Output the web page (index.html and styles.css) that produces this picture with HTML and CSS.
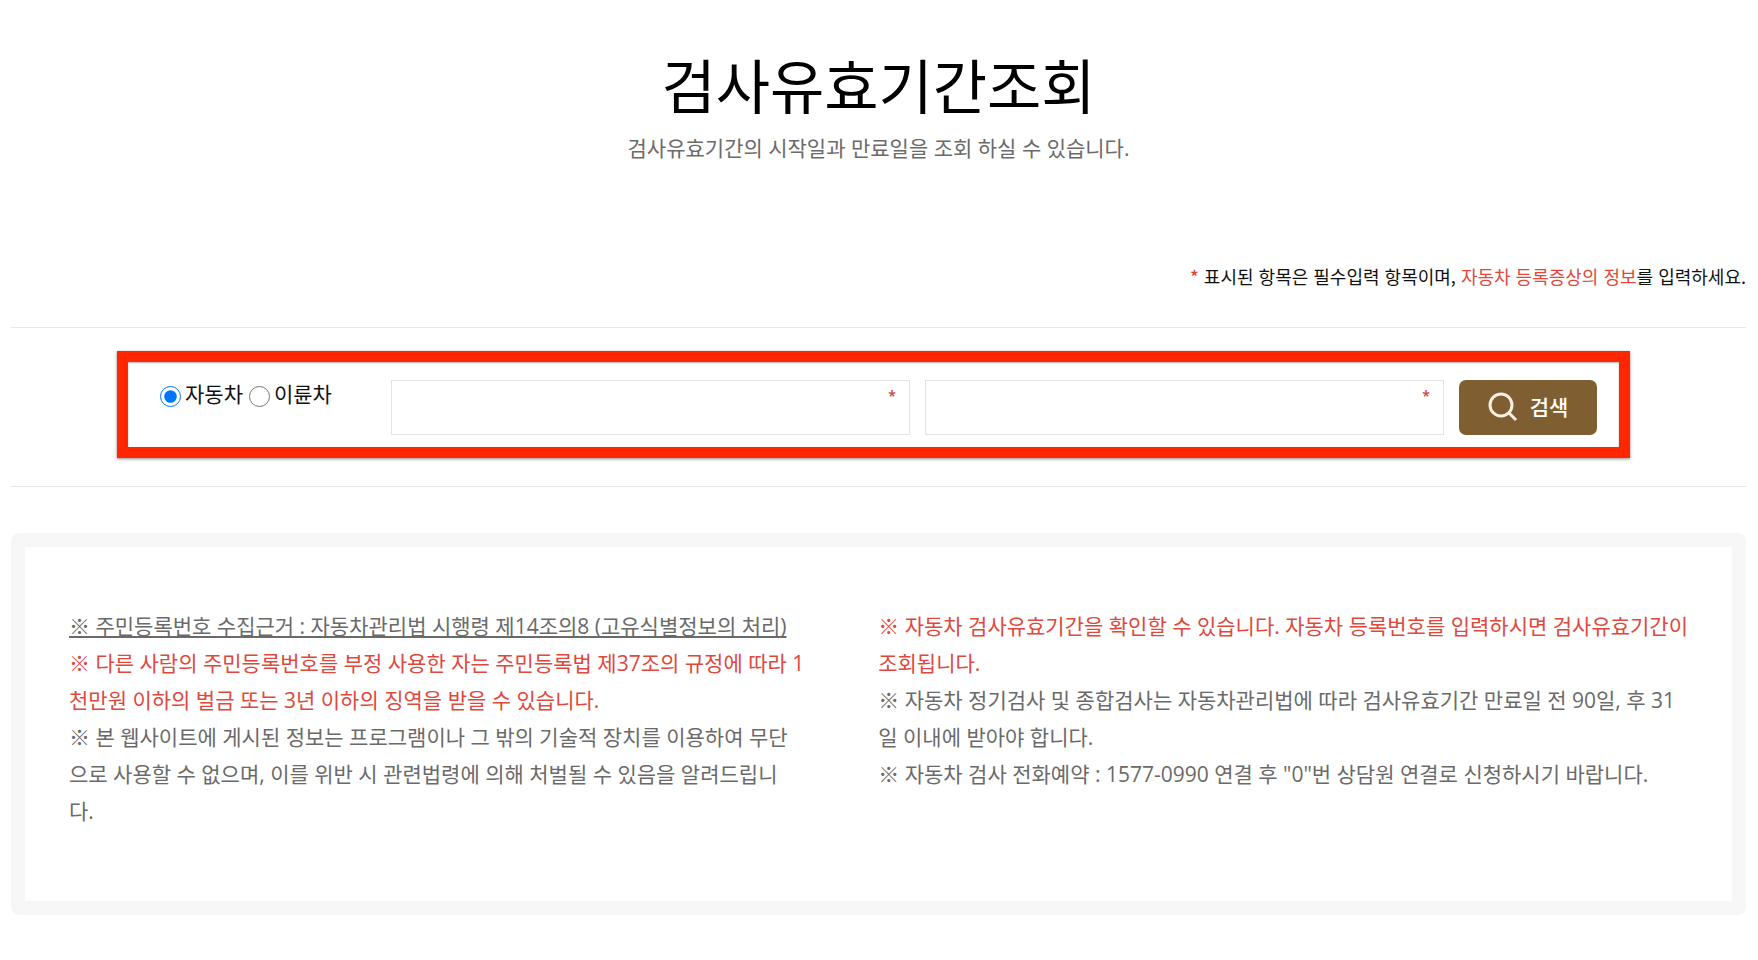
FILE: index.html
```html
<!DOCTYPE html>
<html lang="ko">
<head>
<meta charset="utf-8">
<title>검사유효기간조회</title>
<link rel="stylesheet" href="styles.css">
</head>
<body>
<main class="page">
  <header class="heading">
    <h1 class="title">검사유효기간조회</h1>
    <p class="subtitle">검사유효기간의 시작일과 만료일을 조회 하실 수 있습니다.</p>
  </header>
  <p class="notice"><span class="accent mark">*</span> 표시된 항목은 필수입력 항목이며, <span class="accent">자동차 등록증상의 정보</span>를 입력하세요.</p>
  <section class="search">
    <form class="search-form">
      <div class="kinds">
        <label class="kind"><input class="radio" type="radio" name="kind" checked>자동차</label>
        <label class="kind"><input class="radio" type="radio" name="kind">이륜차</label>
      </div>
      <div class="field">
        <input class="text" type="text" aria-label="자동차 등록번호" required>
        <span class="star">*</span>
      </div>
      <div class="field">
        <input class="text" type="text" aria-label="주민등록번호" required>
        <span class="star">*</span>
      </div>
      <button class="submit" type="submit">
        <svg class="glass" viewBox="0 0 30 30" aria-hidden="true"><circle cx="13" cy="13" r="11"/><path d="M21 21l7 7"/></svg>
        검색
      </button>
    </form>
  </section>
  <section class="info">
    <div class="column">
      <p class="underlined">※ 주민등록번호 수집근거 : 자동차관리법 시행령 제14조의8 (고유식별정보의 처리)</p>
      <p class="accent">※ 다른 사람의 주민등록번호를 부정 사용한 자는 주민등록법 제37조의 규정에 따라 1<br>천만원 이하의 벌금 또는 3년 이하의 징역을 받을 수 있습니다.</p>
      <p>※ 본 웹사이트에 게시된 정보는 프로그램이나 그 밖의 기술적 장치를 이용하여 무단<br>으로 사용할 수 없으며, 이를 위반 시 관련법령에 의해 처벌될 수 있음을 알려드립니<br>다.</p>
    </div>
    <div class="column">
      <p class="accent">※ 자동차 검사유효기간을 확인할 수 있습니다. 자동차 등록번호를 입력하시면 검사유효기간이<br>조회됩니다.</p>
      <p>※ 자동차 정기검사 및 종합검사는 자동차관리법에 따라 검사유효기간 만료일 전 90일, 후 31<br>일 이내에 받아야 합니다.</p>
      <p>※ 자동차 검사 전화예약 : 1577-0990 연결 후 "0"번 상담원 연결로 신청하시기 바랍니다.</p>
    </div>
  </section>
</main>
</body>
</html>
```
FILE: styles.css
```css
* { box-sizing: border-box; }
body {
  margin: 0;
  background: #fff;
  color: #111;
  font-family: "Open Sans", "Noto Sans CJK KR", sans-serif;
  font-size: 21px;
}
h1, p { margin: 0; }
.page { padding: 46px 12px 40px 11px; }
.heading { text-align: center; }
.title {
  color: #000;
  font-size: 59px;
  font-weight: 400;
  line-height: 80px;
}
.subtitle {
  color: #6a6a6a;
  line-height: 44px;
}
.notice {
  margin-top: 88px;
  font-family: "Noto Sans CJK KR", sans-serif;
  font-size: 18px;
  line-height: 36px;
  text-align: right;
}
.accent { color: #de483d; }
.mark { font-weight: 500; }
.search {
  display: flex;
  margin-top: 33px;
  padding: 23px 116px 28px 106px;
  border-top: 1px solid #e8e8e8;
  border-bottom: 1px solid #e8e8e8;
}
.search-form {
  display: flex;
  flex: 1;
  gap: 15px;
  padding: 18px 22px 12px 32px;
  border: 11px solid #ff2600;
  box-shadow: 0 1px 3px rgba(0, 0, 0, 0.45), inset 0 1px 2px rgba(0, 0, 0, 0.3);
}
.kinds {
  display: flex;
  gap: 6px;
  width: 216px;
  line-height: 28px;
}
.kind {
  display: flex;
  align-items: flex-start;
  gap: 4px;
  white-space: nowrap;
}
.radio {
  width: 21px;
  height: 21px;
  margin: 6px 0 0;
  accent-color: #0075ff;
}
.field {
  position: relative;
  flex: 1;
}
.text {
  display: block;
  width: 100%;
  height: 55px;
  padding: 0 32px 0 12px;
  border: 1px solid #e3e3e3;
  border-radius: 0;
  background: #fff;
  font: inherit;
  outline: 0;
}
.star {
  position: absolute;
  top: 6px;
  right: 14px;
  color: #d23a48;
  font-size: 14px;
  font-weight: 600;
  line-height: 20px;
}
.submit {
  display: flex;
  align-items: center;
  justify-content: center;
  gap: 12px;
  width: 138px;
  height: 55px;
  padding: 0 0 2px;
  border: 0;
  border-radius: 7px;
  background: #7f5f31;
  color: #fff;
  font: inherit;
  font-weight: 500;
  line-height: 30px;
}
.glass {
  width: 30px;
  height: 30px;
  fill: none;
  stroke: #fdeee2;
  stroke-width: 3;
}
.info {
  display: grid;
  grid-template-columns: 1fr 1fr;
  margin-top: 46px;
  padding: 61px 44px 65px 44px;
  border: 14px solid #f7f7f7;
  border-radius: 8px;
  color: #6a6a6a;
  line-height: 37px;
}
.column { min-height: 228px; white-space: nowrap; }
.underlined {
  text-decoration: underline;
  text-underline-offset: 2px;
  text-decoration-skip-ink: none;
}
```
